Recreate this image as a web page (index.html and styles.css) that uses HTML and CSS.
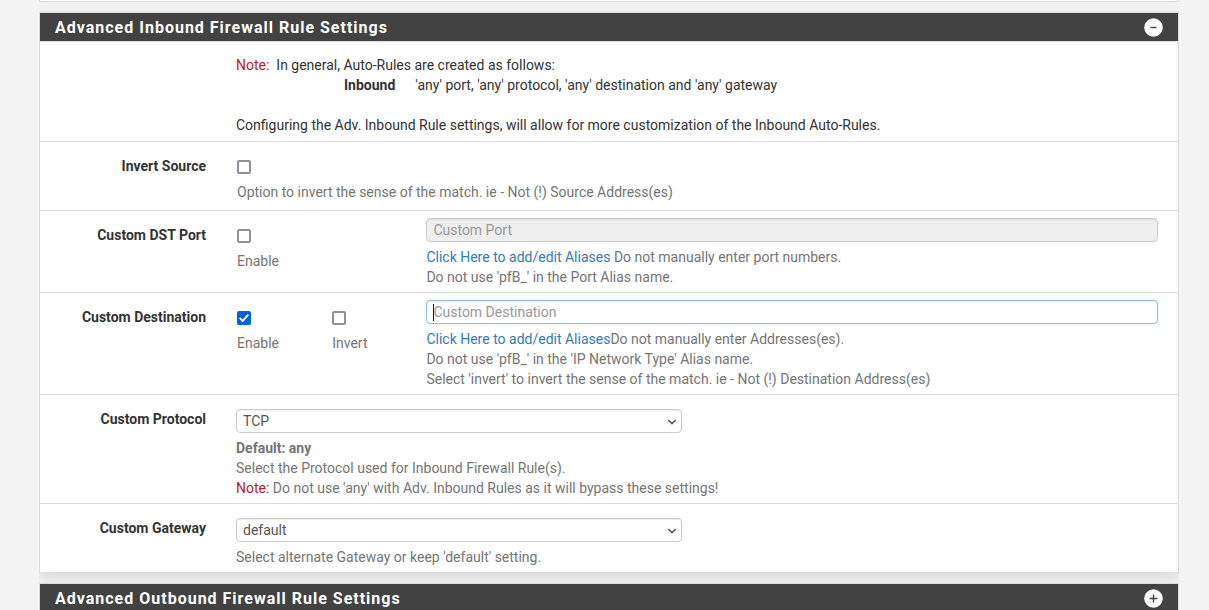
FILE: index.html
```html
<!DOCTYPE html>
<html lang="en">
<head>
<meta charset="utf-8">
<title>Firewall Rule Settings</title>
<link rel="stylesheet" href="styles.css">
</head>
<body>
<main class="container">
  <section class="panel panel-tail"></section>

  <section class="panel">
    <header class="panel-heading">
      <h2 class="panel-title">Advanced Inbound Firewall Rule Settings</h2>
      <button class="toggle" type="button" aria-label="Collapse">
        <svg viewBox="0 0 19 19" width="19" height="19"><circle cx="9.5" cy="9.5" r="9.3" fill="#fff"/><path d="M6.5 9.5h6" stroke="#424242" stroke-width="1.4"/></svg>
      </button>
    </header>

    <div class="row">
      <div></div>
      <div class="intro">
        <p><span class="note">Note:</span>&nbsp; In general, Auto-Rules are created as follows:</p>
        <p class="direction"><strong>Inbound</strong><span>'any' port, 'any' protocol, 'any' destination and 'any' gateway</span></p>
        <p class="intro-more">Configuring the Adv. Inbound Rule settings, will allow for more customization of the Inbound Auto-Rules.</p>
      </div>
    </div>

    <div class="row">
      <label class="row-label" for="invert-source">Invert Source</label>
      <div class="check check-single">
        <input class="checkbox" type="checkbox" id="invert-source">
        <span class="help">Option to invert the sense of the match. ie - Not (!) Source Address(es)</span>
      </div>
    </div>

    <div class="row">
      <label class="row-label" for="port">Custom DST Port</label>
      <div class="fields">
        <div class="check">
          <input class="checkbox" type="checkbox" id="port-enable">
          <label class="help" for="port-enable">Enable</label>
        </div>
        <div class="wide">
          <input class="control" type="text" id="port" placeholder="Custom Port" disabled>
          <p class="help control-help"><a class="link" href="#aliases">Click Here to add/edit Aliases</a> Do not manually enter port numbers.<br>Do not use 'pfB_' in the Port Alias name.</p>
        </div>
      </div>
    </div>

    <div class="row">
      <label class="row-label" for="destination">Custom Destination</label>
      <div class="fields">
        <div class="check">
          <input class="checkbox" type="checkbox" id="dest-enable" checked>
          <label class="help" for="dest-enable">Enable</label>
        </div>
        <div class="check">
          <input class="checkbox" type="checkbox" id="dest-invert">
          <label class="help" for="dest-invert">Invert</label>
        </div>
        <div class="wide">
          <div class="control-wrap">
            <input class="control control-active" type="text" id="destination" placeholder="Custom Destination">
            <span class="caret"></span>
          </div>
          <p class="help control-help"><a class="link" href="#aliases">Click Here to add/edit Aliases</a>Do not manually enter Addresses(es).<br>Do not use 'pfB_' in the 'IP Network Type' Alias name.<br>Select 'invert' to invert the sense of the match. ie - Not (!) Destination Address(es)</p>
        </div>
      </div>
    </div>

    <div class="row">
      <label class="row-label" for="protocol">Custom Protocol</label>
      <div class="fields">
        <div class="half">
          <div class="control-wrap">
            <select class="control" id="protocol"><option>TCP</option><option>UDP</option><option>any</option></select>
            <svg class="chevron" viewBox="0 0 10 6" width="10" height="6"><path d="M1.3 1l3.7 3.6L8.7 1" fill="none" stroke="#555" stroke-width="1.5"/></svg>
          </div>
        </div>
        <p class="help full"><strong>Default: any</strong><br>Select the Protocol used for Inbound Firewall Rule(s).<br><span class="note">Note:</span> Do not use 'any' with Adv. Inbound Rules as it will bypass these settings!</p>
      </div>
    </div>

    <div class="row">
      <label class="row-label" for="gateway">Custom Gateway</label>
      <div class="fields">
        <div class="half">
          <div class="control-wrap">
            <select class="control" id="gateway"><option>default</option></select>
            <svg class="chevron" viewBox="0 0 10 6" width="10" height="6"><path d="M1.3 1l3.7 3.6L8.7 1" fill="none" stroke="#555" stroke-width="1.5"/></svg>
          </div>
        </div>
        <p class="help full">Select alternate Gateway or keep 'default' setting.</p>
      </div>
    </div>
  </section>

  <section class="panel">
    <header class="panel-heading">
      <h2 class="panel-title">Advanced Outbound Firewall Rule Settings</h2>
      <button class="toggle" type="button" aria-label="Expand">
        <svg viewBox="0 0 19 19" width="19" height="19"><circle cx="9.5" cy="9.5" r="9.3" fill="#fff"/><path d="M5.5 9.5h8M9.5 5.5v8" stroke="#424242" stroke-width="1.4"/></svg>
      </button>
    </header>
  </section>
</main>
</body>
</html>
```

FILE: styles.css
```css
* {
  box-sizing: border-box;
}

body {
  margin: 0;
  padding: 0 30px 0 39px;
  height: 100vh;
  overflow: hidden;
  background: #f4f4f4;
  color: #333;
  font: 14px/20px Roboto, sans-serif;
}

p {
  margin: 0;
}

.container {
  overflow: hidden;
}

.panel {
  margin-bottom: 10px;
  background: #fff;
  border: 1px solid #ddd;
  box-shadow: 0 6px 12px rgba(0, 0, 0, 0.1);
}

.panel-tail {
  border-top: 0;
  padding-top: 1px;
}

.panel-heading {
  display: flex;
  align-items: center;
  justify-content: space-between;
  height: 29px;
  padding: 0 15px;
  background: #424242;
  border-bottom: 1px solid #ddd;
}

.panel-title {
  margin: 0;
  padding-top: 2px;
  color: #fff;
  font-size: 16px;
  font-weight: 700;
  letter-spacing: 1px;
}

.toggle {
  display: flex;
  padding: 0;
  border: 0;
  background: none;
}

.row {
  display: grid;
  grid-template-columns: 166px minmax(0, 1fr);
  column-gap: 30px;
  padding: 7px 20px 5px 0;
  border-bottom: 1px solid #ddd;
}

.row:last-child {
  border-bottom: 0;
}

.row-label {
  padding-top: 7px;
  font-weight: 700;
  text-align: right;
}

.intro {
  padding: 6px 0 1px;
}

.intro-more {
  margin-top: 20px;
}

.direction {
  display: flex;
  gap: 20px;
  padding-left: 108px;
}

.note {
  color: #b71c1c;
}

.fields {
  display: grid;
  grid-template-columns: repeat(10, minmax(0, 1fr));
  column-gap: 30px;
}

.check {
  display: flex;
  flex-direction: column;
  align-items: flex-start;
  gap: 8px;
  padding: 11px 0 0 1px;
}

.check-single {
  padding-bottom: 3px;
}

.wide {
  grid-column: 3 / -1;
}

.half {
  grid-column: span 5;
  padding-top: 7px;
}

.full {
  grid-column: 1 / -1;
  margin-top: 5px;
}

.help {
  color: #757575;
}

.control-help {
  margin-top: 5px;
}

.link {
  color: #337ab7;
  text-decoration: none;
}

.checkbox {
  appearance: none;
  width: 14px;
  height: 14px;
  margin: 0;
  border: 2px solid #8f8f9d;
  border-radius: 2px;
  background: #fff;
}

.checkbox:checked {
  border-color: #0060df;
  background: #0060df url("data:image/svg+xml,%3Csvg xmlns='http://www.w3.org/2000/svg' viewBox='0 0 14 14'%3E%3Cpath d='M3.2 7.4l2.6 2.6 5-5.8' fill='none' stroke='white' stroke-width='1.9' stroke-linecap='round' stroke-linejoin='round'/%3E%3C/svg%3E") center / 14px 14px;
  background-origin: border-box;
}

.control-wrap {
  position: relative;
}

.control {
  appearance: none;
  display: block;
  width: 100%;
  height: 24px;
  padding: 0 6px;
  border: 1px solid #ccc;
  border-radius: 4px;
  background: #fff;
  box-shadow: inset 0 1px 1px rgba(0, 0, 0, 0.075);
  color: #555;
  font: inherit;
}

.control::placeholder {
  color: #999;
  opacity: 1;
}

.control:disabled {
  background: #eee;
}

.control-active {
  border-color: #9bbedb;
  box-shadow: inset 0 1px 1px rgba(0, 0, 0, 0.075), 0 0 3px rgba(102, 175, 233, 0.3);
}

.caret {
  position: absolute;
  top: 4px;
  left: 7px;
  width: 1px;
  height: 17px;
  background: #222;
}

.chevron {
  position: absolute;
  top: 10px;
  right: 5px;
}
```
